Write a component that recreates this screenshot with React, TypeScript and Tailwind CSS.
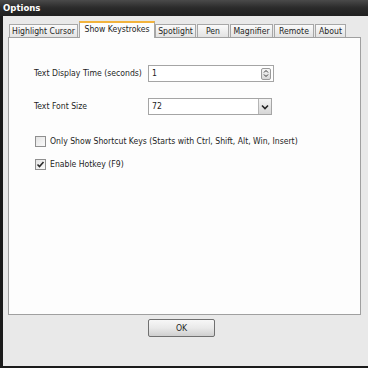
import React from "react";

const font = { fontFamily: "'DejaVu Sans Condensed', 'Liberation Sans', Arial, sans-serif" };

const tabs = [
  { label: "Highlight Cursor", w: "w-[69px]" },
  { label: "Show Keystrokes", w: "w-[76px]", active: true },
  { label: "Spotlight", w: "w-[41px]" },
  { label: "Pen", w: "w-[32px]" },
  { label: "Magnifier", w: "w-[43px]" },
  { label: "Remote", w: "w-[40px]" },
  { label: "About", w: "w-[31px]" },
];

function Checkbox({ checked }: { checked?: boolean }) {
  return (
    <span className="flex h-[11px] w-[11px] shrink-0 items-center justify-center border border-[#8f8f8f] bg-gradient-to-br from-[#e4e4e4] to-[#fafafa]">
      {checked && (
        <svg width="9" height="9" viewBox="0 0 9 9">
          <path d="M1.5 4.5 L3.5 6.5 L7.5 2" fill="none" stroke="#2b2b2b" strokeWidth="1.6" />
        </svg>
      )}
    </span>
  );
}

export default function App() {
  return (
    <div
      className="flex h-[368px] w-[368px] flex-col whitespace-nowrap bg-[#1b1b1b] text-[8.6px] text-[#1e1e1e]"
      style={font}
    >
      {/* title bar */}
      <div className="flex h-[16px] items-center bg-gradient-to-b from-[#4a4a4a] via-[#2a2a2a] to-[#202020] pl-[3px] text-[9.5px] font-bold text-white">
        Options
      </div>

      {/* window body */}
      <div className="mb-[2px] ml-[3px] flex flex-1 flex-col bg-[#e9e9e9] pt-[5px]">
        {/* tab strip */}
        <div className="ml-[6px] flex h-[16px] items-end">
          {tabs.map(t =>
            t.active ? (
              <div
                key={t.label}
                className={`relative z-10 -mb-px flex h-[17px] ${t.w} items-center justify-center border-x border-t-2 border-x-[#a7a7a7] border-t-[#f2b33d] bg-[#fdfdfd] pb-[2px]`}
              >
                {t.label}
              </div>
            ) : (
              <div
                key={t.label}
                className={`mr-[1px] flex h-[13px] ${t.w} items-center justify-center border border-b-0 border-[#a7a7a7] bg-gradient-to-b from-[#fafafa] to-[#e3e3e3] pt-[1px]`}
              >
                {t.label}
              </div>
            ),
          )}
        </div>

        {/* tab panel */}
        <div className="ml-[5px] mr-[7px] flex h-[278px] flex-col border border-[#a0a0a0] bg-[#fdfdfd] pl-[25px] pt-[27px]">
          <div className="flex h-[17px] items-center">
            <span className="w-[114px]">Text Display Time (seconds)</span>
            <div className="flex h-[17px] w-[126px] items-center justify-between border border-[#a5a5a5] bg-white pl-[3px] pr-[2px]">
              <span>1</span>
              <span className="flex h-[12px] w-[10px] flex-col items-center justify-center rounded-[2px] border border-[#9a9a9a] bg-gradient-to-b from-[#f6f6f6] to-[#d8d8d8]">
                <svg width="6" height="9" viewBox="0 0 6 9">
                  <path d="M1 3.5 L3 1.5 L5 3.5 M1 5.5 L3 7.5 L5 5.5" fill="none" stroke="#333" strokeWidth="1" />
                </svg>
              </span>
            </div>
          </div>

          <div className="mt-[16px] flex h-[17px] items-center">
            <span className="w-[114px]">Text Font Size</span>
            <div className="flex h-[17px] w-[124px] items-center justify-between border border-[#a5a5a5] bg-white pl-[3px]">
              <span>72</span>
              <span className="flex h-[15px] w-[13px] items-center justify-center border-l border-[#b5b5b5] bg-gradient-to-b from-[#f3f3f3] to-[#d6d6d6]">
                <svg width="8" height="6" viewBox="0 0 8 6">
                  <path d="M1 1.5 L4 4.5 L7 1.5" fill="none" stroke="#222" strokeWidth="1.6" />
                </svg>
              </span>
            </div>
          </div>

          <div className="ml-[1px] mt-[21px] flex h-[11px] items-center gap-[4px]">
            <Checkbox />
            <span>Only Show Shortcut Keys (Starts with Ctrl, Shift, Alt, Win, Insert)</span>
          </div>

          <div className="ml-[1px] mt-[12px] flex h-[11px] items-center gap-[4px]">
            <Checkbox checked />
            <span>Enable Hotkey (F9)</span>
          </div>
        </div>

        {/* OK button */}
        <div className="ml-[145px] mt-[4px] flex h-[18px] w-[67px] items-center justify-center rounded-[2px] border border-[#707070] bg-gradient-to-b from-[#f7f7f7] via-[#e9e9e9] to-[#cfcfcf]">
          OK
        </div>
      </div>
    </div>
  );
}
